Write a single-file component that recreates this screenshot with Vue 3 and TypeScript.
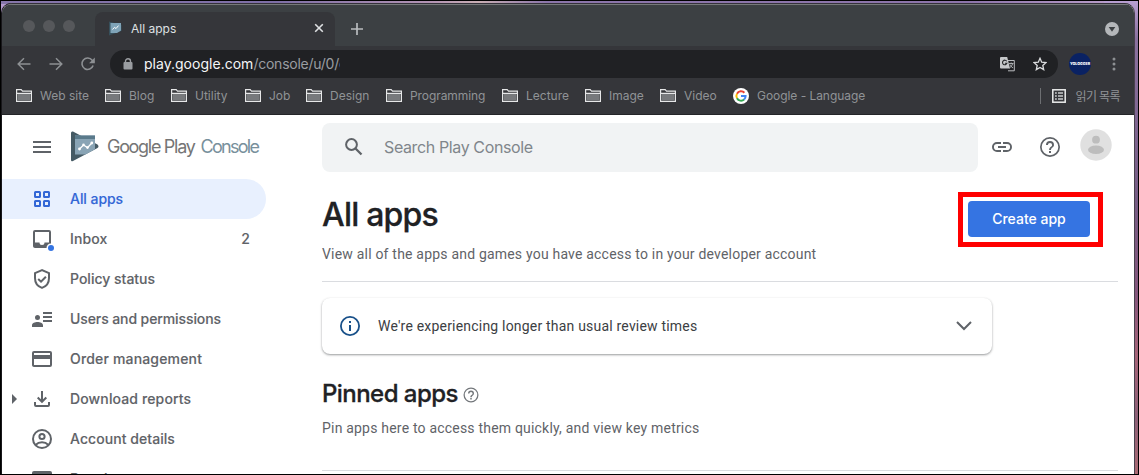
<script setup lang="ts">
interface Bookmark {
  label: string
  cls: string
}
interface NavItem {
  label: string
  icon: string
  cls: string
  badge?: string
  expandable?: boolean
  active?: boolean
}

const bookmarks: Bookmark[] = [
  { label: 'Web site', cls: 'b-web' },
  { label: 'Blog', cls: 'b-blog' },
  { label: 'Utility', cls: 'b-utility' },
  { label: 'Job', cls: 'b-job' },
  { label: 'Design', cls: 'b-design' },
  { label: 'Programming', cls: 'b-prog' },
  { label: 'Lecture', cls: 'b-lecture' },
  { label: 'Image', cls: 'b-image' },
  { label: 'Video', cls: 'b-video' },
]

const navItems: NavItem[] = [
  { label: 'All apps', icon: 'apps', cls: 'n-apps', active: true },
  { label: 'Inbox', icon: 'inbox', cls: 'n-inbox', badge: '2' },
  { label: 'Policy status', icon: 'shield', cls: 'n-policy' },
  { label: 'Users and permissions', icon: 'users', cls: 'n-users' },
  { label: 'Order management', icon: 'card', cls: 'n-order' },
  { label: 'Download reports', icon: 'download', cls: 'n-download', expandable: true },
  { label: 'Account details', icon: 'account', cls: 'n-account' },
  { label: 'Developer page', icon: 'page', cls: 'n-dev' },
]
</script>

<template>
  <div class="desktop">
    <div class="window">
      <div class="tabstrip">
        <div class="lights"><i></i><i></i><i></i></div>
        <div class="tab">
          <svg class="favicon" width="13" height="15" viewBox="0 0 13 15">
            <path d="M0 .5L12.500 4v6L0 14.500z" fill="#37505c" />
            <path d="M1.500 2H12v7.500L8 12H1.500z" fill="#7fa3b7" />
            <path d="M3.500 8.500l2-2.200L7 7.600l2.500-3" fill="none" stroke="#fff" stroke-width="1" />
          </svg>
          <span class="tab-title">All apps</span>
          <svg class="close" width="10" height="10" viewBox="0 0 10 10">
            <path d="M1.200 1.200l7.600 7.600M8.800 1.200L1.200 8.800" stroke="#dfe1e3" stroke-width="1.600" />
          </svg>
        </div>
        <svg class="plus" width="12" height="12" viewBox="0 0 12 12">
          <path d="M6 0v12M0 6h12" stroke="#b9bcbf" stroke-width="1.700" />
        </svg>
        <svg class="tab-search" width="14" height="14" viewBox="0 0 14 14">
          <circle cx="7" cy="7" r="7" fill="#b4b7ba" />
          <path d="M3.700 5h6.600L7 9.800z" fill="#3c4043" />
        </svg>
      </div>

      <div class="toolbar">
        <svg class="tool" width="16" height="16" viewBox="0 0 16 16">
          <path d="M14.500 8H2.500M8 2.200L2.200 8 8 13.800" fill="none" stroke="#8d9093" stroke-width="1.500" />
        </svg>
        <svg class="tool" width="16" height="16" viewBox="0 0 16 16">
          <path d="M1.500 8h12M8 2.200L13.800 8 8 13.800" fill="none" stroke="#8d9093" stroke-width="1.500" />
        </svg>
        <svg class="tool" width="16" height="16" viewBox="0 0 16 16">
          <path d="M13.100 9.500A5.700 5.700 0 1 1 12.200 4.300L14 6.200" fill="none" stroke="#8d9093" stroke-width="1.600" />
          <path d="M14.800 1.500v5.700H9.100z" fill="#8d9093" />
        </svg>
        <div class="omnibox">
          <svg class="lock" width="10" height="12" viewBox="0 0 10 12">
            <path d="M2.500 5V3.200a2.500 2.500 0 0 1 5 0V5" fill="none" stroke="#9a9da1" stroke-width="1.400" />
            <rect x=".5" y="4" width="9" height="7.500" rx="1" fill="#9a9da1" />
          </svg>
          <div class="url"><span class="host">play.google.com</span><span class="path">/console/u/0/c</span></div>
          <svg class="translate" width="15" height="15" viewBox="0 0 15 15">
            <path d="M6 3.500h8.300v10.300H8" fill="none" stroke="#b9bbbe" stroke-width="1" />
            <path d="M1 0h6.200L10 11.500H1a1 1 0 0 1-1-1V1a1 1 0 0 1 1-1z" fill="#c6c8ca" />
            <path d="M6.800 4.300A2.300 2.300 0 1 0 7 6.200H4.900" fill="none" stroke="#27282b" stroke-width="1.100" />
            <path d="M9 6.500h4.500M11.200 5.500v1M12.500 6.800c-.4 1.800-1.400 3-2.700 4M10 7.500c.5 1.500 1.500 2.500 3 3.400" fill="none" stroke="#b9bbbe" stroke-width=".9" />
          </svg>
          <svg class="star" width="14" height="14" viewBox="0 0 14 14">
            <path d="M7 1.300l1.700 3.900 4.300.4-3.200 2.800.9 4.200L7 10.400l-3.700 2.200.9-4.200L1 5.600l4.300-.4z" fill="none" stroke="#dadcde" stroke-width="1.300" />
          </svg>
        </div>
        <div class="profile">YOLOGGER</div>
        <svg class="more" width="4" height="14" viewBox="0 0 4 14">
          <circle cx="2" cy="2" r="1.500" fill="#8d9093" />
          <circle cx="2" cy="7" r="1.500" fill="#8d9093" />
          <circle cx="2" cy="12" r="1.500" fill="#8d9093" />
        </svg>
      </div>

      <div class="bookmarks">
        <div v-for="b in bookmarks" :key="b.label" class="bookmark">
          <svg width="16" height="13" viewBox="0 0 16 13">
            <path d="M.6.600h4.600l1.300 1.500h8.900v10.300H.6z" fill="#35363a" stroke="#e6e7e8" stroke-width="1.200" />
            <path d="M1.600 5h12.800v6.600H1.600z" fill="#77797c" />
            <path d="M.6 4.400h14.800" stroke="#e6e7e8" stroke-width="1.100" />
          </svg>
          <span :class="b.cls">{{ b.label }}</span>
        </div>
        <div class="bookmark">
          <svg width="16" height="16" viewBox="0 0 16 16">
            <circle cx="8" cy="8" r="8" fill="#fff" />
            <g fill="none" stroke-width="2">
              <path d="M4 5.700A4.600 4.600 0 0 1 11.400 4.700" stroke="#ea4335" />
              <path d="M4 10.300a4.600 4.600 0 0 1 0-4.600" stroke="#fbbc05" />
              <path d="M11.100 11.500A4.600 4.600 0 0 1 4 10.300" stroke="#34a853" />
              <path d="M8 8h4.600a4.600 4.600 0 0 1-1.500 3.500" stroke="#4285f4" />
            </g>
          </svg>
          <span class="b-google">Google - Language</span>
        </div>
        <div class="reading">
          <svg width="14" height="14" viewBox="0 0 14 14">
            <rect x=".8" y=".8" width="12.400" height="12.400" fill="none" stroke="#eceded" stroke-width="1.500" />
            <path d="M3 4h1.800M6 4h5M3 7h1.800M6 7h5M3 10h1.800M6 10h5" stroke="#c9cbcd" stroke-width="1.500" />
          </svg>
          <span>읽기 목록</span>
        </div>
      </div>

      <div class="page">
        <aside class="sidebar">
          <div class="brand">
            <svg class="menu" width="18" height="12" viewBox="0 0 18 12">
              <path d="M0 1h18M0 6h18M0 11h18" stroke="#5f6368" stroke-width="2" />
            </svg>
            <svg class="logo" width="28" height="31" viewBox="0 0 28 31">
              <path d="M0 2Q0 0 2 .6L26.500 13.500Q28.500 15.500 26.500 17L2 30Q0 31 0 29z" fill="#455a64" />
              <path d="M4 4.500h20v13.800L14.500 23.500H4z" fill="#89a4b5" />
              <path d="M4 4.500h20V8H4z" fill="#5a7a8b" />
              <path d="M8.500 18l4-4 4 2.600 4.300-4.600" fill="none" stroke="#fff" stroke-width="1.300" />
              <g fill="#fff"><circle cx="8.500" cy="18" r="1.400" /><circle cx="12.500" cy="13.900" r="1.300" /><circle cx="16.500" cy="16.600" r="1.300" /><circle cx="20.800" cy="12" r="1.400" /></g>
            </svg>
            <div class="wordmark"><span class="gp">Google Play</span><span class="console">Console</span></div>
          </div>
          <nav>
            <div v-for="n in navItems" :key="n.label" class="nav" :class="{ active: n.active }">
              <span class="caret" :class="{ shown: n.expandable }"></span>
              <svg class="nav-icon" width="24" height="24" viewBox="0 0 24 24">
                <g v-if="n.icon === 'apps'" fill="none" stroke="#3367d6" stroke-width="2">
                  <rect x="5" y="5" width="5" height="5" rx=".5" /><rect x="14" y="5" width="5" height="5" rx=".5" />
                  <rect x="5" y="14" width="5" height="5" rx=".5" /><rect x="14" y="14" width="5" height="5" rx=".5" />
                </g>
                <g v-else-if="n.icon === 'inbox'">
                  <path fill="#5f6368" d="M19 3H5a2 2 0 0 0-2 2v14c0 1.100.9 2 2 2h14a2 2 0 0 0 2-2V5a2 2 0 0 0-2-2zm0 12.500h-4.500a2.500 2.500 0 0 1-5 0H5V5h14z" />
                  <circle cx="21" cy="21" r="4.500" fill="#fff" /><circle cx="21" cy="21" r="3" fill="#3574e2" />
                </g>
                <g v-else-if="n.icon === 'shield'" fill="none" stroke="#5f6368" stroke-width="2">
                  <path d="M12 3.100L5 6.200V11c0 4.600 2.900 8.500 7 9.900 4.100-1.400 7-5.300 7-9.900V6.200z" />
                  <path d="M8.200 12l2.800 2.700 4.900-5" />
                </g>
                <path v-else-if="n.icon === 'users'" fill="#5f6368" d="M13 5h9v2h-9zm0 4h9v2h-9zm0 4h9v2h-9zM7.500 8a2.500 2.500 0 1 1 0 5 2.500 2.500 0 0 1 0-5zM2 20v-1.800C2 16 5 15 7.500 15s5.500 1 5.500 3.200V20z" />
                <path v-else-if="n.icon === 'card'" fill="#5f6368" d="M20 4H4a2 2 0 0 0-2 2v12c0 1.100.9 2 2 2h16a2 2 0 0 0 2-2V6a2 2 0 0 0-2-2zm0 14H4v-6h16zm0-10H4V6h16z" />
                <g v-else-if="n.icon === 'download'" fill="none" stroke="#5f6368" stroke-width="2">
                  <path d="M12 4v10.500M7.700 10.500l4.300 4.300 4.300-4.300" /><path d="M5 15v3q0 1 1 1h12q1 0 1-1v-3" />
                </g>
                <g v-else-if="n.icon === 'account'" fill="none" stroke="#5f6368" stroke-width="2">
                  <circle cx="12" cy="12" r="9" /><circle cx="12" cy="9.500" r="2.600" /><path d="M5.500 18c3.700-3.600 9.300-3.600 13 0" />
                </g>
                <path v-else fill="#5f6368" d="M4 4h16a2 2 0 0 1 2 2v12H2V6a2 2 0 0 1 2-2z" />
              </svg>
              <span class="nav-label" :class="n.cls">{{ n.label }}</span>
              <span v-if="n.badge" class="badge">{{ n.badge }}</span>
            </div>
          </nav>
        </aside>

        <main class="main">
          <div class="topbar">
            <div class="search">
              <svg width="18" height="18" viewBox="0 0 18 18">
                <circle cx="6.500" cy="6.500" r="5.400" fill="none" stroke="#5f6368" stroke-width="2" />
                <path d="M10.500 10.500l6 6" stroke="#5f6368" stroke-width="2.300" />
              </svg>
              <span>Search Play Console</span>
            </div>
            <svg class="link" width="24" height="24" viewBox="0 0 24 24">
              <path fill="#5f6368" d="M3.900 12A3.100 3.100 0 0 1 7 8.900h4V7H7a5 5 0 0 0 0 10h4v-1.900H7A3.100 3.100 0 0 1 3.900 12zM8 13h8v-2H8zm9-6h-4v1.900h4a3.100 3.100 0 0 1 0 6.200h-4V17h4a5 5 0 0 0 0-10z" />
            </svg>
            <svg class="help" width="24" height="24" viewBox="0 0 24 24">
              <path fill="#5f6368" d="M11 18h2v-2h-2zm1-16a10 10 0 1 0 0 20 10 10 0 0 0 0-20zm0 18.300a8.300 8.300 0 1 1 0-16.600 8.300 8.300 0 0 1 0 16.600zM12 6a4 4 0 0 0-4 4h1.900a2.100 2.100 0 1 1 4.200 0c0 2-3 1.750-3 5h1.900c0-2.250 3-2.500 3-5a4 4 0 0 0-4-4z" />
            </svg>
            <svg class="avatar" width="32" height="32" viewBox="0 0 32 32">
              <circle cx="16" cy="16" r="15.700" fill="#e0e0e0" />
              <circle cx="16" cy="10.700" r="3.900" fill="#bdbdbd" />
              <ellipse cx="16" cy="20.700" rx="8" ry="4.300" fill="#bdbdbd" />
            </svg>
          </div>

          <div class="heading">
            <div class="heading-text">
              <h1>All apps</h1>
              <p class="p-view">View all of the apps and games you have access to in your developer account</p>
            </div>
            <div class="highlight"><button class="create"><span>Create app</span></button></div>
          </div>

          <div class="notice">
            <svg width="24" height="24" viewBox="0 0 24 24">
              <circle cx="12" cy="12" r="9.100" fill="none" stroke="#185089" stroke-width="1.800" />
              <path d="M12 11v6M12 7v2" stroke="#185089" stroke-width="2" />
            </svg>
            <span>We're experiencing longer than usual review times</span>
            <svg class="chevron" width="18" height="12" viewBox="0 0 18 12">
              <path d="M2 2l7 7 7-7" fill="none" stroke="#5f6368" stroke-width="2" />
            </svg>
          </div>

          <section class="pinned">
            <h2><span>Pinned apps</span>
              <svg width="18" height="18" viewBox="0 0 24 24">
                <path fill="#73777b" d="M11 18h2v-2h-2zm1-16a10 10 0 1 0 0 20 10 10 0 0 0 0-20zm0 18.300a8.300 8.300 0 1 1 0-16.600 8.300 8.300 0 0 1 0 16.600zM12 6a4 4 0 0 0-4 4h1.900a2.100 2.100 0 1 1 4.200 0c0 2-3 1.750-3 5h1.900c0-2.250 3-2.500 3-5a4 4 0 0 0-4-4z" />
              </svg>
            </h2>
            <p class="p-pin">Pin apps here to access them quickly, and view key metrics</p>
          </section>
        </main>
      </div>
    </div>
  </div>
</template>

<style>
body {
  margin: 0;
  overflow: hidden;
}
</style>

<style scoped>
* {
  box-sizing: border-box;
}
.desktop {
  width: 1139px;
  height: 475px;
  border: 1px solid #000;
  padding: 2px 3px 0 1px;
  overflow: hidden;
  background:
    linear-gradient(90deg, #8676aa 0, #7d6ea6 24%, #b494b4 38%, #c9aeb4 42%, #8b75aa 48%, #8c74aa 85%, #b79bc8 97%, transparent 97%) 0 0 / 100% 3px no-repeat,
    linear-gradient(180deg, #b89fd2 0, #8a719f 8%, #755c84 42%, #84567c 62%, #a66478 75%, #8c6077 88%, #aa6972 100%);
  font-family: Inter, "Noto Sans CJK KR", sans-serif;
}
.window {
  width: 1133px;
  height: 471px;
  border-radius: 10px 10px 0 0;
  overflow: hidden;
  background: #fff;
  border-top: 1px solid #343139;
  border-right: 1px solid #49414d;
  box-shadow: -1px 0 0 #18171b;
}
svg {
  display: block;
  flex: none;
}
.tabstrip {
  height: 42px;
  background: #3c4043;
  border-top: 1px solid #77797b;
  display: flex;
  align-items: center;
}
.lights {
  display: flex;
  gap: 8px;
  width: 93px;
  padding-left: 21px;
  margin-top: 1px;
}
.lights i {
  width: 12px;
  height: 12px;
  border-radius: 50%;
  background: #56585b;
}
.tab {
  width: 240px;
  height: 34px;
  align-self: flex-end;
  background: #35363a;
  border-radius: 8px 8px 0 0;
  display: flex;
  align-items: center;
  padding: 0 11px 2px 14px;
}
.tab-title {
  margin-left: 9px;
  flex: 1;
  font-size: 12px;
  color: #dfe1e3;
}
.plus {
  margin: 7px 0 0 16px;
}
.tab-search {
  margin: 7px 15px 0 auto;
}
.toolbar {
  height: 36px;
  background: #35363a;
  display: flex;
  align-items: center;
  padding: 0 18px 0 14px;
}
.tool {
  margin-right: 16px;
}
.omnibox {
  width: 948px;
  height: 28px;
  margin-left: -2px;
  border-radius: 14px;
  background: #202124;
  display: flex;
  align-items: center;
  padding: 0 11px 0 13px;
}
.url {
  margin-left: 11px;
  width: 196px;
  overflow: hidden;
  white-space: nowrap;
  font-size: 14px;
  line-height: 20px;
  color: #9a9da1;
  letter-spacing: -0.12px;
}
.host {
  color: #f5f6f7;
  letter-spacing: 0.02px;
}
.path {
  letter-spacing: -0.25px;
}
.translate {
  margin-left: auto;
}
.star {
  margin-left: 18px;
}
.profile {
  width: 22px;
  height: 22px;
  margin-left: 11px;
  border-radius: 50%;
  background: #0a2263;
  color: #fff;
  font-size: 3.6px;
  font-weight: 900;
  line-height: 22px;
  text-align: center;
}
.more {
  margin-left: auto;
}
.bookmarks {
  height: 33px;
  background: #35363a;
  border-bottom: 1px solid #242528;
  display: grid;
  grid-template-columns: 89px 66px 74px 61px 80px 116px 83px 75px 73px 1fr auto;
  padding: 0 14px 5px 14px;
  align-items: center;
  font-size: 12px;
  color: #909396;
  white-space: nowrap;
}
.bookmark {
  display: flex;
  align-items: center;
}
.bookmark span {
  margin-left: 8px;
}
.b-prog {
  letter-spacing: -0.08px;
}
.b-google {
  letter-spacing: -0.05px;
}
.reading {
  display: flex;
  align-items: center;
  border-left: 1px solid #6d6f72;
  height: 16px;
  padding-left: 11px;
}
.reading span {
  margin-left: 9px;
  letter-spacing: -0.6px;
}
.page {
  display: flex;
  height: 360px;
}
.sidebar {
  width: 320px;
  flex: none;
}
.brand {
  height: 64px;
  display: flex;
  align-items: center;
  padding-left: 31px;
}
.logo {
  margin: -2px 0 0 20px;
}
.wordmark {
  display: flex;
  margin-left: 8px;
  font-size: 18px;
  line-height: 24px;
  letter-spacing: -1.3px;
  color: #757575;
  white-space: nowrap;
}
.console {
  margin-left: 6px;
  letter-spacing: -1.7px;
  color: #78909c;
}
.console,
.gp {
  font-weight: 400;
}
.nav {
  width: 264px;
  height: 40px;
  display: flex;
  align-items: center;
  padding-left: 10px;
  border-radius: 0 20px 20px 0;
  color: #5f6368;
  font-size: 14px;
  font-weight: 500;
  white-space: nowrap;
  -webkit-text-stroke: 0.12px currentColor;
}
.nav.active {
  background: #e8f0fe;
  color: #3367d6;
}
.caret {
  width: 18px;
}
.caret.shown {
  width: 0;
  border: 5px solid transparent;
  border-left-color: #5f6368;
  border-right-width: 0;
  margin-right: 13px;
}
.nav-label {
  margin: -2px 0 0 16px;
}
.n-apps {
  letter-spacing: -0.05px;
}
.n-inbox {
  letter-spacing: 0.12px;
}
.n-users {
  letter-spacing: -0.1px;
}
.n-order {
  letter-spacing: 0.17px;
}
.n-download {
  letter-spacing: 0.13px;
}
.n-account {
  letter-spacing: 0.06px;
}
.badge {
  margin: -2px 16px 0 auto;
}
.main {
  width: 812px;
  flex: none;
}
.topbar {
  height: 64px;
  display: flex;
  align-items: center;
}
.search {
  width: 656px;
  height: 49px;
  border-radius: 8px;
  background: #f1f3f4;
  display: flex;
  align-items: center;
  padding-left: 23px;
  color: #80868b;
  font-size: 16px;
  letter-spacing: -0.38px;
}
.search span {
  margin-left: 21px;
}
.link {
  margin-left: 12px;
}
.help {
  margin-left: 24px;
}
.avatar {
  margin: -4px 0 0 18px;
}
.heading {
  width: 796px;
  height: 103px;
  border-bottom: 1px solid #dadce0;
  display: flex;
  justify-content: space-between;
}
h1 {
  margin: 16px 0 0;
  font-size: 32px;
  line-height: 40px;
  font-weight: 500;
  letter-spacing: -0.8px;
  color: #202124;
  -webkit-text-stroke: 0.3px currentColor;
}
p {
  margin: 0;
  font-family: Roboto, sans-serif;
  font-size: 14px;
  line-height: 20px;
  letter-spacing: 0.2px;
  color: #5f6368;
  white-space: nowrap;
}
.p-view {
  margin-top: 9px;
}
.highlight {
  width: 145px;
  height: 55px;
  margin: 13px 15px 0 0;
  border: 5px solid #f00;
  padding: 4px 5px;
}
.create {
  display: block;
  width: 122px;
  height: 36px;
  border: 0;
  padding: 0 0 1px;
  border-radius: 4px;
  background: #3574e2;
  color: #fff;
  font-family: inherit;
  font-size: 14px;
  font-weight: 500;
}
.notice {
  width: 670px;
  height: 56px;
  margin-top: 16px;
  border-radius: 8px;
  box-shadow: 0 1px 2px rgba(60, 64, 67, 0.4), 0 1px 3px rgba(60, 64, 67, 0.16);
  display: flex;
  align-items: center;
  padding: 0 19px 0 16px;
  font-family: Roboto, sans-serif;
  font-size: 14px;
  letter-spacing: 0.2px;
  color: #3c4043;
}
.notice span {
  margin-left: 16px;
}
.chevron {
  margin-left: auto;
}
.pinned {
  width: 796px;
  height: 117px;
  padding-top: 24px;
  border-bottom: 1px solid #dadce0;
}
h2 {
  margin: 0;
  display: flex;
  align-items: center;
  font-size: 24px;
  line-height: 32px;
  font-weight: 500;
  letter-spacing: -0.55px;
  color: #202124;
  -webkit-text-stroke: 0.3px currentColor;
}
h2 svg {
  margin: 1px 0 0 4px;
}
.p-pin {
  margin-top: 8px;
}
</style>
